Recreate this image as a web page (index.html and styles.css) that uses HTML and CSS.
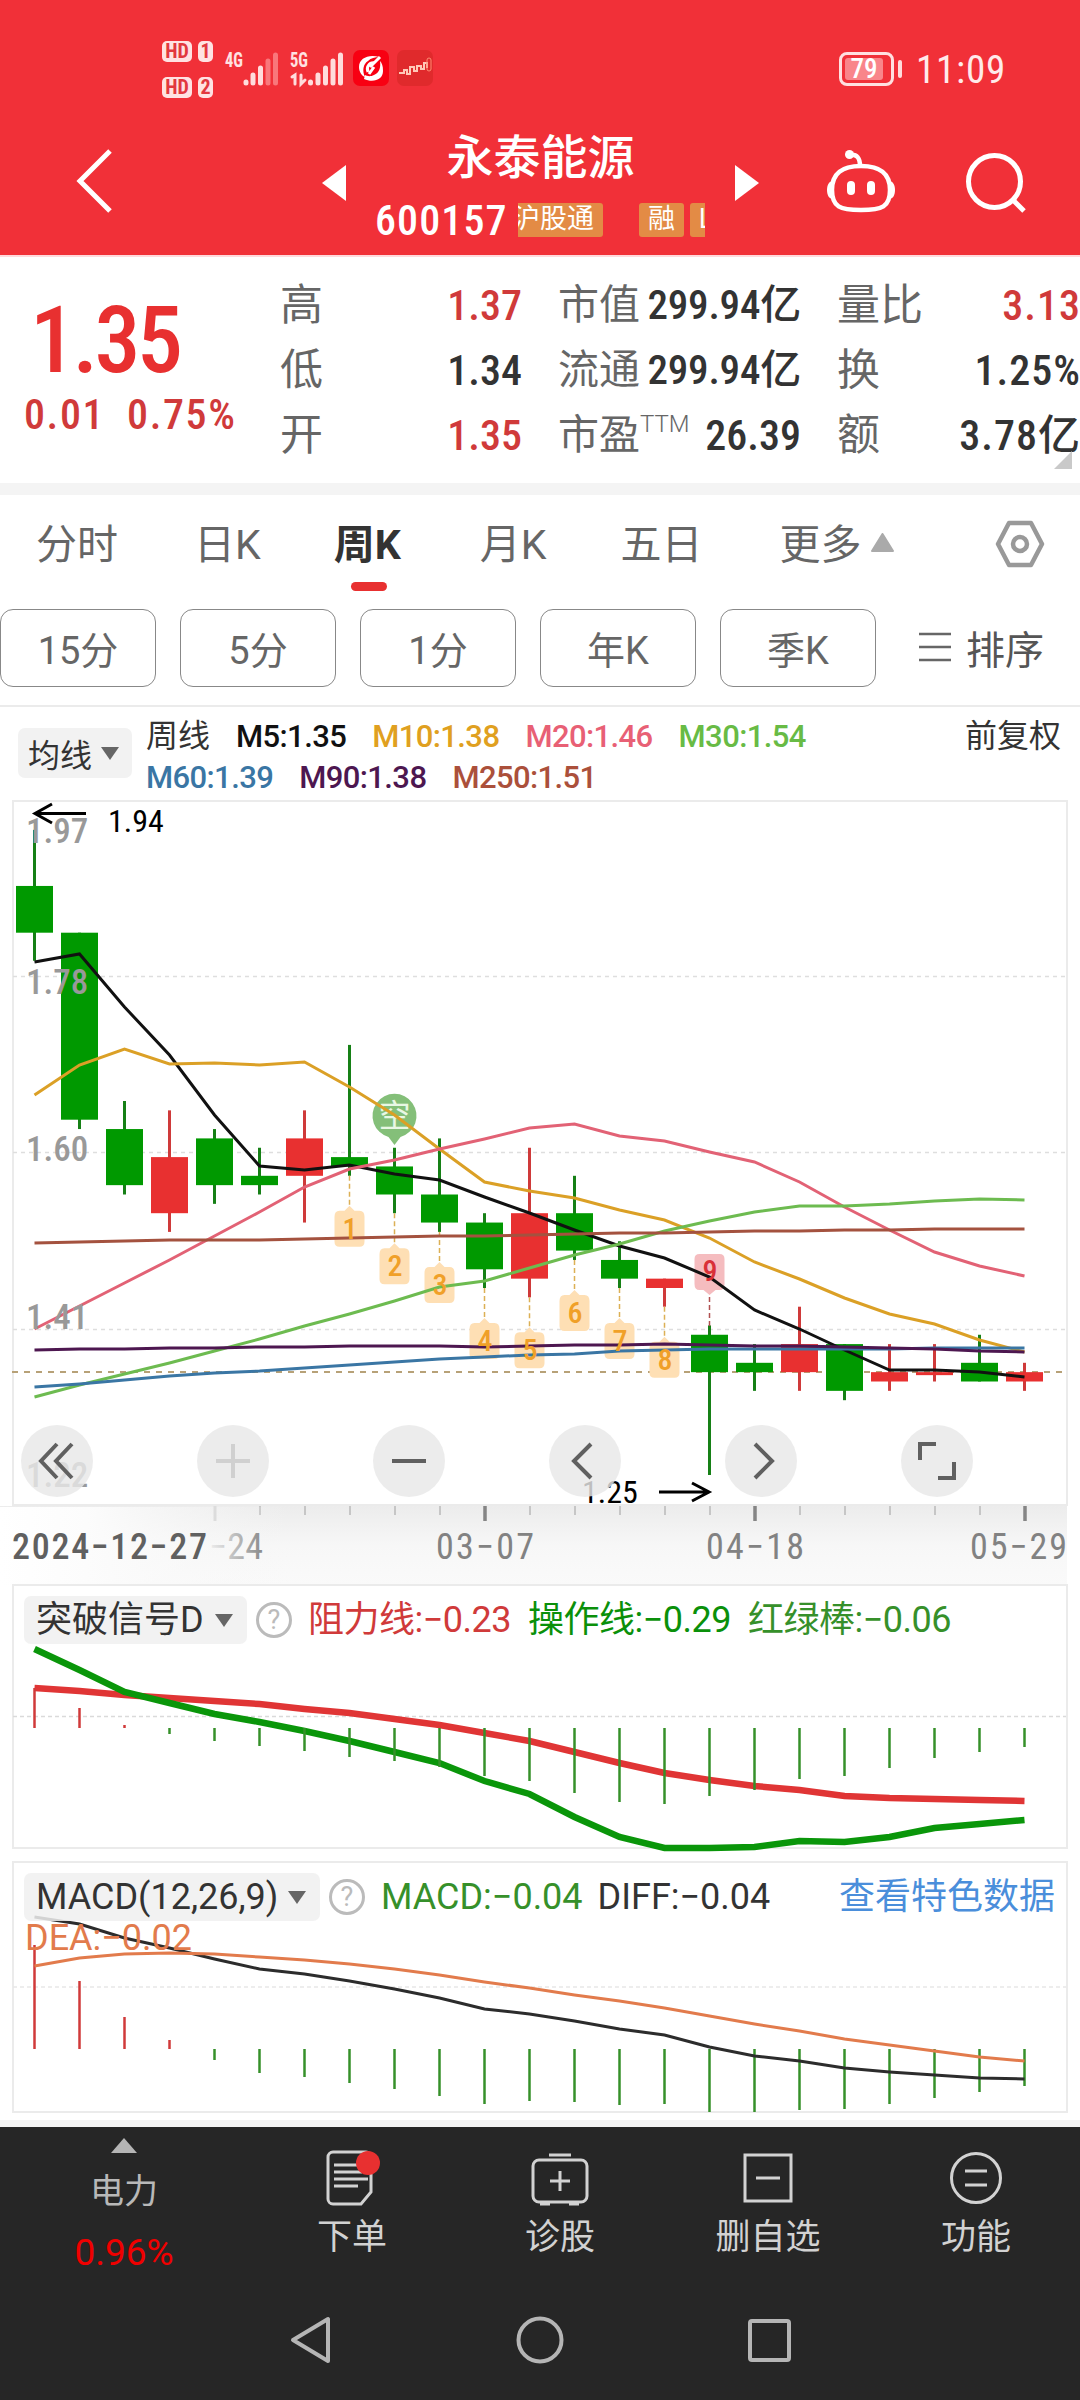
FILE: index.html
```html
<!DOCTYPE html>
<html lang="zh-CN">
<head>
    <meta charset="UTF-8">
    <meta name="viewport" content="width=device-width, initial-scale=1.0">
    <title>永泰能源 600157</title>
    <link rel="stylesheet" href="styles.css">
</head>
<body>
    <header>
        <div class="status-bar">
            <div class="sims">
                <div><b class="hd">HD</b><b class="sim">1</b></div>
                <div><b class="hd">HD</b><b class="sim">2</b></div>
            </div>
            <svg class="signals" width="90" height="40" viewBox="223 48 90 40">
                <text x="225" y="66" font-size="21" textLength="18" lengthAdjust="spacingAndGlyphs">4G</text>
                <text x="290" y="66" font-size="21" textLength="18" lengthAdjust="spacingAndGlyphs">5G</text>
                <g stroke="#ffdcdc" stroke-width="5" stroke-linecap="round">
                    <path d="M246 81v1M253 74v8M260.500 67v15"/>
                    <path d="M268 60v22M275.500 54v28" stroke="#f9777b"/>
                    <path d="M292 76l3-2v9M301 74v9l4-4" stroke-width="3" fill="none"/>
                    <path d="M310.500 81v1"/>
                </g>
            </svg>
            <svg width="36" height="40" viewBox="313 48 36 40">
                <path d="M318 74v8M325.500 67v15M333 60v22M340.500 54v28" stroke="#ffdcdc" stroke-width="5" stroke-linecap="round"/>
            </svg>
            <svg class="app" width="36" height="36" viewBox="0 0 36 36">
                <rect width="36" height="36" rx="7" fill="#f80012"/>
                <path d="M26 7C16 4 6 8 6 17c0 5 3 9 6 10-3-6-2-13 3-16 3-3 7-4 11-4zM11 29c9 4 19 1 19-8 0-5-1-8-3-10 1 7-1 12-6 14-4 2-7 1-9 0z" fill="#fff"/>
                <path d="M27 7L17 17M22 13c-6-1-9 4-7 9M21 17l-5 7" stroke="#fff" stroke-width="3" fill="none"/>
            </svg>
            <svg class="app" width="36" height="36" viewBox="0 0 36 36">
                <rect width="36" height="36" rx="7" fill="#e02a2c"/>
                <path d="M2 23h5v-3h3v4h3v-7h4v4h3v-5h4v3h3v-6h3v5" stroke="#ffc9b8" stroke-width="2" fill="none"/>
                <rect x="30" y="8" width="4" height="13" rx="2" stroke="#ff8a70" fill="none"/>
            </svg>
            <div class="battery"><span>79</span></div>
            <i class="battery-tip"></i>
            <span class="clock">11:09</span>
        </div>
        <div class="title-bar">
            <svg class="back" width="40" height="68" viewBox="0 0 40 68"><path d="M36 4L6 34l30 30" fill="none" stroke="#fff" stroke-width="5"/></svg>
            <svg class="prev" width="24" height="36"><path d="M24 0v36L0 18z" fill="#fff"/></svg>
            <div class="stock">
                <h1>永泰能源</h1>
                <div class="stock-sub">
                    <span class="code">600157</span>
                    <div class="tags"><span>沪股通</span><span class="rong">融</span><span>L</span></div>
                </div>
            </div>
            <svg class="next" width="24" height="36"><path d="M0 0v36l24-18z" fill="#fff"/></svg>
            <svg class="robot" width="72" height="68" viewBox="825 148 72 68">
                <g fill="none" stroke="#fff" stroke-width="4.500">
                    <path d="M832 190c0-17 10-24 29-24s29 7 29 24-8 20-29 20-29-3-29-20z"/>
                    <path d="M850 155c7-1 10 3 10 11"/>
                </g>
                <g fill="#fff">
                    <circle cx="849.500" cy="154.500" r="4.500"/>
                    <path d="M833 181c-4 0-6 4-6 9s2 9 6 9zM889 181c4 0 6 4 6 9s-2 9-6 9z"/>
                    <rect x="847" y="181" width="8" height="14" rx="4"/><rect x="867" y="181" width="8" height="14" rx="4"/>
                </g>
            </svg>
            <svg class="search" width="64" height="64" viewBox="964 152 64 64">
                <g fill="none" stroke="#fff" stroke-width="5"><circle cx="994.500" cy="181.500" r="26"/><path d="M1013 200l11 11"/></g>
            </svg>
        </div>
    </header>

    <section class="quote">
        <div class="price">
            <strong>1.35</strong>
            <p><span>0.01</span><span>0.75%</span></p>
        </div>
        <dl>
            <div><dt>高</dt><dd class="up">1.37</dd></div>
            <div><dt>低</dt><dd>1.34</dd></div>
            <div><dt>开</dt><dd class="up">1.35</dd></div>
        </dl>
        <dl class="mid">
            <div><dt>市值</dt><dd>299.94亿</dd></div>
            <div><dt>流通</dt><dd>299.94亿</dd></div>
            <div><dt>市盈<sup>TTM</sup></dt><dd>26.39</dd></div>
        </dl>
        <dl class="last">
            <div><dt>量比</dt><dd class="up">3.13</dd></div>
            <div><dt>换</dt><dd>1.25%</dd></div>
            <div><dt>额</dt><dd>3.78亿</dd></div>
        </dl>
        <svg class="corner" width="18" height="18"><path d="M18 0v18H0z" fill="#c9c9c9"/></svg>
    </section>

    <nav class="tabs">
        <a>分时</a>
        <a>日K</a>
        <a class="active">周K</a>
        <a>月K</a>
        <a>五日</a>
        <a class="more">更多<svg width="23" height="19"><path d="M11.500 1L22 18H1z" fill="#aaa" stroke="#aaa" stroke-width="2" stroke-linejoin="round"/></svg></a>
        <svg class="setting" width="50" height="48" viewBox="0 0 50 48"><g fill="none" stroke="#999" stroke-width="4.500" stroke-linejoin="round"><path d="M14 3h22l11 21-11 21H14L3 24z"/><circle cx="25" cy="24" r="7"/></g></svg>
    </nav>
    <div class="periods">
        <button>15分</button>
        <button>5分</button>
        <button>1分</button>
        <button>年K</button>
        <button>季K</button>
        <span class="sort"><svg width="32" height="30"><path d="M0 2h32M0 15h32M0 28h32" stroke="#666" stroke-width="2.500"/></svg>排序</span>
    </div>

    <section class="kline">
        <div class="ma-bar">
            <div class="picker">均线<i class="caret"></i></div>
            <div class="ma-list">
                <p><span class="cycle">周线</span><span class="m5">M5:1.35</span><span class="m10">M10:1.38</span><span class="m20">M20:1.46</span><span class="m30">M30:1.54</span></p>
                <p><span class="m60">M60:1.39</span><span class="m90">M90:1.38</span><span class="m250">M250:1.51</span></p>
            </div>
            <span class="fuquan">前复权</span>
        </div>
        <svg id="kChart" width="1080" height="785" viewBox="0 800 1080 785">
            <defs>
                <linearGradient id="axisBg" x1="0" y1="0" x2="0" y2="1"><stop offset="0" stop-color="#ececec"/><stop offset=".5" stop-color="#f7f7f7"/><stop offset="1" stop-color="#fafafa"/></linearGradient>
                <linearGradient id="fade"><stop offset="0" stop-color="#fff"/><stop offset=".3" stop-color="#fcfcfc"/><stop offset="1" stop-color="#f6f6f6" stop-opacity="0"/></linearGradient>
                <linearGradient id="dateFade"><stop offset="0" stop-color="#eee"/><stop offset="1" stop-color="#8a8a8a"/></linearGradient>
            </defs>
        </svg>
        <div class="tools">
            <span><svg width="36" height="36"><path d="M18 1L2 18l16 17M33 1L17 18l16 17"/></svg></span>
            <span class="off"><svg width="36" height="36"><path d="M18 1v34M1 18h34"/></svg></span>
            <span><svg width="36" height="36"><path d="M1 18h34"/></svg></span>
            <span><svg width="36" height="36"><path d="M24 1L7 18l17 17"/></svg></span>
            <span><svg width="36" height="36"><path d="M12 1l17 17-17 17"/></svg></span>
            <span><svg width="38" height="38"><path d="M2 18V2h16M36 20v16H20"/></svg></span>
        </div>
    </section>

    <section class="panel signal">
        <svg id="signalChart" width="1080" height="270" viewBox="0 1583 1080 270"></svg>
        <div class="legend">
            <div class="picker">突破信号D<i class="caret"></i></div>
            <i class="help">?</i>
            <span class="red">阻力线:−0.23</span><span class="green">操作线:−0.29</span><span class="stick">红绿棒:−0.06</span>
        </div>
    </section>

    <section class="panel macd">
        <svg id="macdChart" width="1080" height="256" viewBox="0 1860 1080 256"></svg>
        <div class="legend">
            <div class="picker">MACD(12,26,9)<i class="caret"></i></div>
            <i class="help">?</i>
            <span class="stick">MACD:−0.04</span><span class="diff">DIFF:−0.04</span>
            <a>查看特色数据</a>
        </div>
        <span class="dea">DEA:−0.02</span>
    </section>

    <footer>
        <div class="menu">
            <div class="sector">
                <svg width="26" height="15"><path d="M13 0l13 15H0z" fill="#b5b5b5"/></svg>
                <span>电力</span>
                <em>0.96%</em>
            </div>
            <div class="item">
                <svg width="56" height="60" viewBox="0 0 56 60"><path d="M9 4h33a5 5 0 0 1 5 5v35L37 56H9a5 5 0 0 1-5-5V9a5 5 0 0 1 5-5z"/><path d="M10 17h24M10 24h28M10 31h34M10 38h24"/><circle class="dot" cx="44" cy="15" r="12"/></svg>
                <span>下单</span>
            </div>
            <div class="item">
                <svg width="60" height="60" viewBox="0 0 60 60"><rect x="3" y="12" width="54" height="42" rx="6"/><path d="M19 7h22M30 23v20M20 33h20M10 56h10M39 56h10"/></svg>
                <span>诊股</span>
            </div>
            <div class="item">
                <svg width="56" height="60" viewBox="0 0 56 60"><path d="M5 7h46v46H5zM16 30h24"/></svg>
                <span>删自选</span>
            </div>
            <div class="item">
                <svg width="56" height="60" viewBox="0 0 56 60"><circle cx="28" cy="30" r="24.500"/><path d="M17 23h22M17 37h22"/></svg>
                <span>功能</span>
            </div>
        </div>
        <div class="sys-nav">
            <svg width="48" height="50" viewBox="0 0 48 50"><path d="M41 4v42L6 25z"/></svg>
            <svg width="50" height="50" viewBox="0 0 50 50"><circle cx="25" cy="25" r="21.500"/></svg>
            <svg width="48" height="50" viewBox="0 0 48 50"><rect x="5" y="6" width="39" height="39" rx="2"/></svg>
        </div>
    </footer>

    <script>
        const GREEN = '#009900', RED = '#e83030';
        const x = i => 34.5 + i * 45;
        const y = p => 1475 - (p - 1.25) * 935;

        // [最高, 开/收高, 开/收低, 最低, 是否上涨]
        const candles = [
            [1.94, 1.88, 1.83, 1.80, 0], [1.83, 1.83, 1.63, 1.62, 0], [1.65, 1.62, 1.56, 1.55, 0],
            [1.64, 1.59, 1.53, 1.51, 1], [1.62, 1.61, 1.56, 1.54, 0], [1.60, 1.57, 1.56, 1.55, 0],
            [1.64, 1.61, 1.57, 1.52, 1], [1.71, 1.59, 1.58, 1.57, 0], [1.60, 1.58, 1.55, 1.53, 0],
            [1.61, 1.55, 1.52, 1.51, 0], [1.53, 1.52, 1.47, 1.45, 0], [1.60, 1.53, 1.46, 1.44, 1],
            [1.57, 1.53, 1.49, 1.48, 0], [1.50, 1.48, 1.46, 1.45, 0], [1.46, 1.46, 1.45, 1.43, 1],
            [1.41, 1.40, 1.36, 1.25, 0], [1.39, 1.37, 1.36, 1.34, 0], [1.43, 1.39, 1.36, 1.34, 1],
            [1.39, 1.39, 1.34, 1.33, 0], [1.39, 1.36, 1.35, 1.34, 1], [1.39, 1.36, 1.357, 1.35, 1],
            [1.40, 1.37, 1.35, 1.35, 0], [1.37, 1.36, 1.35, 1.34, 1]
        ];
        const lines = {
            '#111': [962, 954, 1007, 1055, 1115, 1166, 1170, 1165, 1174, 1180, 1197, 1213, 1230, 1246, 1258, 1277, 1310, 1329, 1350, 1370, 1370, 1372, 1377],
            '#dba026': [1095, 1065, 1049, 1064, 1063, 1065, 1062, 1087, 1115, 1149, 1182, 1191, 1198, 1210, 1220, 1238, 1262, 1279, 1298, 1314, 1324, 1340, 1352],
            '#e26275': [1329, 1306, 1283, 1260, 1236, 1212, 1187, 1169, 1160, 1149, 1139, 1128, 1124, 1136, 1141, 1152, 1162, 1182, 1207, 1230, 1252, 1266, 1276],
            '#6dbb50': [1397, 1385, 1374, 1363, 1351, 1339, 1326, 1314, 1301, 1287, 1281, 1268, 1255, 1244, 1231, 1221, 1212, 1206, 1206, 1204, 1201, 1199, 1200],
            '#3a76a4': [1387, 1384, 1380, 1376, 1373, 1371, 1368, 1365, 1362, 1359, 1357, 1355, 1354, 1351, 1350, 1349, 1349, 1349, 1349, 1349, 1348, 1348, 1348],
            '#4d1750': [1350, 1349, 1349, 1348, 1348, 1347, 1347, 1346, 1346, 1346, 1347, 1346, 1345, 1345, 1344, 1345, 1346, 1346, 1347, 1348, 1349, 1351, 1352],
            '#a4523f': [1243, 1242, 1241, 1240, 1240, 1240, 1239, 1238, 1237, 1236, 1236, 1235, 1234, 1233, 1233, 1232, 1231, 1231, 1230, 1230, 1229, 1229, 1229]
        };
        const resist = [1688, 1691, 1695, 1698, 1701, 1704, 1709, 1713, 1719, 1725, 1733, 1741, 1752, 1763, 1773, 1780, 1786, 1790, 1796, 1798, 1799, 1800, 1801];
        const operate = [1649, 1670, 1692, 1703, 1714, 1722, 1731, 1741, 1752, 1763, 1781, 1794, 1817, 1837, 1848, 1848, 1847, 1841, 1842, 1837, 1828, 1824, 1820];
        const sticks = [1688, 1708, 1725, 1734, 1741, 1746, 1751, 1757, 1761, 1767, 1776, 1781, 1793, 1802, 1804, 1796, 1790, 1779, 1776, 1768, 1758, 1752, 1747];
        const diff = [1917, 1924, 1938, 1948, 1959, 1969, 1974, 1981, 1989, 1998, 2009, 2014, 2021, 2029, 2035, 2047, 2056, 2061, 2068, 2072, 2075, 2078, 2079];
        const dea = [1966, 1958, 1954, 1953, 1954, 1957, 1960, 1964, 1969, 1975, 1982, 1988, 1995, 2001, 2008, 2016, 2024, 2031, 2039, 2045, 2051, 2057, 2061];
        const macd = [1945, 1981, 2017, 2040, 2060, 2073, 2077, 2083, 2089, 2096, 2104, 2101, 2102, 2105, 2104, 2112, 2112, 2110, 2109, 2104, 2098, 2092, 2086];

        const poly = (ys, color, w) => `<polyline points="${ys.map((v, i) => x(i) + ',' + v).join(' ')}" fill="none" stroke="${color}" stroke-width="${w}"/>`;
        const path = (d, color, w, dash) => `<path d="${d}" fill="none" stroke="${color}" stroke-width="${w}" ${dash ? `stroke-dasharray="${dash}"` : ''}/>`;
        const text = (tx, ty, s, cls, extra) => `<text x="${tx}" y="${ty}" class="${cls}" ${extra || ''}>${s}</text>`;
        const frame = (top, h) => `<rect x="13" y="${top}" width="1054" height="${h}" fill="none" stroke="#ebebeb" stroke-width="2"/>`;
        const bars = (ys, zero) => ys.map((v, i) => path(`M${x(i)} ${zero}V${v}`, v < zero ? '#d03a3a' : '#36902a', 2.5)).join('');

        function drawKline() {
            let s = '<rect x="0" y="1506" width="1067" height="79" fill="url(#axisBg)"/>';
            s += frame(801, 704);
            s += path('M13 976.5H1066M13 1152.5H1066M13 1329.5H1066', '#dedede', 1.5, '4 4');
            s += path('M12 1372H1066', '#b7a177', 2, '6 6');
            candles.forEach(([hi, top, bot, lo, up], i) => {
                const color = up ? RED : GREEN;
                s += path(`M${x(i)} ${y(hi)}V${y(lo)}`, up ? '#cf3a3a' : '#168016', 3);
                s += `<rect x="${x(i) - 18.5}" y="${y(top)}" width="37" height="${Math.max(y(bot) - y(top), 3)}" fill="${color}"/>`;
            });
            // 九转序列
            for (let n = 1; n <= 8; n++) {
                const i = n + 6, lo = y(candles[i][3]), t = lo + 30, cx = x(i);
                s += path(`M${cx} ${lo}V${t}`, '#dcb055', 1.5, '5 3');
                s += `<path d="M${cx} ${t}l5 5h5q5 0 5 6v25q0 5-5 5h-20q-5 0-5-5v-25q0-6 5-6h5z" fill="#fedfb4"/>`;
            }
            s += path(`M${x(15)} 1297V1326`, '#b05050', 1.5, '5 3');
            s += `<path d="M${x(15)} 1295l-6-5h-4q-5 0-5-6v-25q0-5 5-5h20q5 0 5 5v25q0 6-5 6h-4z" fill="#f5bcbf"/>`;
            s += `<path d="M${x(8)} 1145l-6-8a22 22 0 1 1 12 0z" fill="#84bf79"/>` + text(x(8), 1127, '空', 'kong');
            for (const c in lines) s += poly(lines[c], c, 3);
            for (let n = 1; n <= 8; n++) s += text(x(n + 6) + .5, y(candles[n + 6][3]) + 63, n, 'nine', 'fill="#f0a028"');
            s += text(x(15) + .5, 1281, '9', 'nine', 'fill="#d93038"');
            [['1.97', 843], ['1.78', 994], ['1.60', 1161], ['1.41', 1329], ['1.22', 1487]].forEach(([t, ty]) => {
                s += text(26, ty, t, 'scale');
            });
            s += path('M86 813.500H35M52 804L35 813.500L52 823', '#000', 3) + text(108, 832, '1.94', 'peak');
            s += path('M659 1492H709M692 1483L709 1492L692 1501', '#000', 3) + text(582, 1503, '1.25', 'peak');
            for (let i = 5; i < 23; i++) {
                const big = i % 6 == 4;
                s += path(`M${x(i) + .5} 1506v${big ? 15 : 9}`, big ? '#858585' : '#c6c6c6', big ? 3.5 : 2);
            }
            s += '<rect x="0" y="1507" width="290" height="78" fill="url(#fade)"/>';
            s += path('M215 1506v15', '#dcdcdc', 3);
            s += text(209, 1559, '−24', 'date', 'textLength="54" style="fill:url(#dateFade)"');
            s += text(12, 1559, '2024−12−27', 'date dark', 'textLength="195"');
            s += text(436, 1559, '03−07', 'date', 'textLength="98"') + text(706, 1559, '04−18', 'date', 'textLength="98"') + text(970, 1559, '05−29', 'date', 'textLength="97"');
            document.getElementById('kChart').innerHTML += s;
        }

        function drawSignal() {
            document.getElementById('signalChart').innerHTML = frame(1585, 263)
                + path('M13 1716.5H1066', '#dadada', 1.5, '4 3') + poly(resist, '#e03535', 6.5)
                + poly(operate, '#0a960a', 6.5) + bars(sticks, 1728);
        }

        function drawMacd() {
            document.getElementById('macdChart').innerHTML = frame(1862, 250)
                + path('M13 1987H1066', '#e8e8e8', 1.5, '4 3') + bars(macd, 2049)
                + poly(diff, '#2c2c2c', 3) + poly(dea, '#e27b4c', 3);
        }

        drawKline();
        drawSignal();
        drawMacd();
    </script>
</body>
</html>
```
FILE: styles.css
```css
* {
    box-sizing: border-box;
    margin: 0;
    padding: 0;
}
body {
    width: 1080px;
    height: 2400px;
    overflow: hidden;
    background-color: #fff;
    color: #333;
    font-family: "Roboto Condensed", "Noto Sans CJK SC", sans-serif;
}
svg {
    display: block;
    flex: none;
}
i, em {
    font-style: normal;
}
header {
    height: 255px;
    background-color: #f13038;
    color: #fff;
}
.status-bar {
    display: flex;
    align-items: center;
    height: 138px;
    padding-left: 162px;
}
.sims {
    width: 61px;
    display: flex;
    flex-direction: column;
    gap: 15px;
}
.sims div {
    display: flex;
    gap: 6px;
}
.sims b {
    height: 21px;
    line-height: 21px;
    font-size: 20px;
    text-align: center;
    background-color: #ffe2e2;
    color: #e2383e;
    border-radius: 5px;
}
.hd {
    width: 30px;
}
.sim {
    width: 15px;
    border-top-right-radius: 8px;
}
.signals text {
    fill: #ffe2e2;
    font-weight: 700;
}
.app {
    margin: -2px 0 0 4px;
}
.app + .app {
    margin-left: 8px;
}
.battery {
    width: 55px;
    height: 34px;
    margin-left: 406px;
    padding: 3px;
    border: 3px solid #ffe0e0;
    border-radius: 8px;
    font-size: 27px;
    font-weight: 500;
    line-height: 22px;
    text-align: center;
}
.battery span {
    display: block;
    width: 38px;
    height: 22px;
    border-radius: 3px;
    background-color: #f9858a;
}
.battery-tip {
    width: 4px;
    height: 18px;
    margin-left: 4px;
    border-radius: 2px;
    background-color: #ffdcdc;
}
.clock {
    margin: 2px 0 0 14px;
    font-size: 39px;
    letter-spacing: .8px;
    color: #ffeaea;
}
.title-bar {
    display: flex;
    height: 117px;
}
.back {
    margin: 9px 0 0 74px;
}
.prev {
    margin: 27px 0 0 208px;
}
.stock {
    width: 331px;
    margin: -8px 0 0 29px;
}
.stock h1 {
    width: 331px;
    text-align: center;
    font-size: 47px;
    font-weight: 500;
    line-height: 56px;
}
.stock-sub {
    display: flex;
    align-items: center;
    height: 50px;
    margin-top: 9px;
}
.code {
    width: 143px;
    font-size: 42px;
    font-weight: 500;
    letter-spacing: 1.1px;
}
.tags {
    display: flex;
    width: 187px;
    overflow: hidden;
    font-size: 27px;
}
.tags span {
    flex: none;
    height: 34px;
    padding: 0 9px;
    margin-right: 6px;
    line-height: 33px;
    border-radius: 3px;
    background-color: #e38b45;
}
.tags span:first-child {
    margin-left: -14px;
    margin-right: 36px;
}
.next {
    margin: 27px 0 0 29px;
}
.robot {
    margin: 10px 0 0 66px;
}
.search {
    margin: 14px 0 0 67px;
}
.quote {
    position: relative;
    display: flex;
    height: 240px;
    border-top: 2px solid #ffd9dc;
    border-bottom: 12px solid #f4f4f4;
    font-size: 42px;
}
.price {
    width: 280px;
    padding: 32px 0 0 24px;
    color: #d03a3a;
}
.price strong {
    display: block;
    padding-left: 6px;
    font-size: 92px;
    font-weight: 500;
    line-height: 104px;
    letter-spacing: -3.5px;
    color: #e83030;
}
.price p {
    display: flex;
    gap: 22px;
    font-weight: 500;
    line-height: 44px;
    letter-spacing: 1.6px;
}
dl {
    width: 242px;
    padding-top: 16px;
}
dl div {
    display: flex;
    justify-content: space-between;
    height: 65px;
    line-height: 65px;
}
dl.mid {
    width: 243px;
    margin-left: 36px;
}
dl.last {
    width: 243px;
    margin-left: 36px;
}
dt {
    white-space: nowrap;
    font-size: 43px;
    color: #666;
}
.mid dt {
    font-size: 41px;
}
sup {
    position: relative;
    top: -2px;
    font-family: Roboto, sans-serif;
    font-weight: 300;
    font-size: 24px;
    line-height: 1;
}
dd {
    font-weight: 500;
}
.mid dd {
    font-size: 41px;
    letter-spacing: -.2px;
}
.mid div:last-child dd {
    font-size: 42px;
    letter-spacing: 0;
}
.last dd {
    letter-spacing: 1px;
    margin-right: -1px;
}
.up {
    color: #d03a3a;
}
.corner {
    position: absolute;
    right: 8px;
    bottom: 14px;
}
.tabs {
    display: flex;
    align-items: center;
    height: 97px;
    padding-left: 36px;
    font-family: Roboto, "Noto Sans CJK SC", sans-serif;
    font-size: 41px;
    line-height: 60px;
    color: #666;
}
.tabs a {
    position: relative;
    margin-top: 3px;
}
.tabs a:nth-child(2) {
    margin-left: 76px;
}
.tabs a:nth-child(3) {
    margin-left: 73px;
}
.tabs a:nth-child(4) {
    margin-left: 79px;
}
.tabs a:nth-child(5) {
    margin-left: 74px;
}
.tabs a.active {
    font-weight: 700;
    color: #333;
}
.tabs .active::after {
    content: "";
    position: absolute;
    left: 17px;
    bottom: -16px;
    width: 36px;
    height: 9px;
    border-radius: 5px;
    background-color: #e83030;
}
.tabs .more {
    display: flex;
    align-items: center;
    gap: 9px;
    margin-left: 77px;
}
.more svg {
    margin-top: -5px;
}
.setting {
    margin-left: auto;
    margin-right: 35px;
}
.periods {
    display: flex;
    gap: 24px;
    height: 115px;
    padding-top: 17px;
    border-bottom: 2px solid #ebebeb;
}
.periods button {
    width: 156px;
    height: 78px;
    padding-bottom: 2px;
    font-family: Roboto, "Noto Sans CJK SC", sans-serif;
    font-size: 38px;
    color: #666;
    background-color: #fff;
    border: 1px solid #888;
    border-radius: 13px;
}
.sort {
    display: flex;
    align-items: center;
    gap: 15px;
    height: 76px;
    margin-left: 19px;
    font-size: 39px;
    color: #555;
}
.kline {
    position: relative;
}
.ma-bar {
    display: flex;
    height: 93px;
    padding-left: 18px;
    font-family: Roboto, "Noto Sans CJK SC", sans-serif;
    font-size: 31px;
}
.picker {
    display: flex;
    align-items: center;
    background-color: #f2f2f2;
    border-radius: 7px;
}
.ma-bar .picker {
    width: 114px;
    height: 50px;
    margin-top: 21px;
    padding-left: 10px;
    font-size: 32px;
}
.caret {
    margin-left: 9px;
    border: 9px solid transparent;
    border-top: 13px solid #666;
    border-bottom: 0;
}
.ma-list {
    margin: 9px 0 0 14px;
    line-height: 41px;
}
.ma-list p {
    display: flex;
    gap: 26px;
    height: 41px;
    font-weight: 500;
    letter-spacing: -.6px;
}
.ma-list .cycle {
    font-size: 32px;
    font-weight: 400;
    letter-spacing: 0;
}
.m5 { color: #111; }
.m10 { color: #e0a020; }
.m20 { color: #e86075; }
.m30 { color: #68bb45; }
.m60 { color: #3a76a4; }
.m90 { color: #4d1750; }
.m250 { color: #ab503b; }
.fuquan {
    margin-left: auto;
    margin-right: 19px;
    line-height: 59px;
    font-size: 32px;
}
.kong {
    font-size: 32px;
    fill: #e8f7e4;
    text-anchor: middle;
}
.nine {
    font-size: 30px;
    font-weight: 500;
    text-anchor: middle;
}
.scale {
    font-size: 35px;
    font-weight: 500;
    fill: #999;
}
.peak {
    font-size: 32px;
}
.date {
    font-size: 36px;
    fill: #828282;
    font-weight: 400;
}
.date.dark {
    fill: #606060;
    font-weight: 500;
}
.tools {
    position: absolute;
    left: 21px;
    top: 718px;
    display: flex;
    gap: 104px;
}
.tools span {
    display: flex;
    align-items: center;
    justify-content: center;
    width: 72px;
    height: 72px;
    border-radius: 50%;
    background-color: rgba(232, 232, 232, .82);
}
.tools svg {
    overflow: visible;
}
.tools path {
    fill: none;
    stroke: #606060;
    stroke-width: 4;
}
.tools .off path {
    stroke: #d0d0d0;
}
.panel {
    position: relative;
}
.signal {
    height: 277px;
    margin-top: -2px;
}
.macd {
    height: 260px;
}
.legend {
    position: absolute;
    left: 24px;
    right: 24px;
    top: 13px;
    display: flex;
    align-items: center;
    height: 48px;
    font-family: Roboto, "Noto Sans CJK SC", sans-serif;
    font-size: 36px;
    line-height: 44px;
    white-space: nowrap;
}
.legend .picker {
    height: 48px;
    width: 223px;
    padding-left: 12px;
    background-color: rgba(240, 240, 240, .85);
}
.macd .picker {
    width: 296px;
}
.legend .picker .caret {
    margin-left: auto;
    margin-right: 14px;
}
.help {
    width: 36px;
    height: 36px;
    margin: 0 16px 0 9px;
    border: 3px solid #bbb;
    border-radius: 50%;
    line-height: 31px;
    font-size: 27px;
    text-align: center;
    color: #bbb;
}
.legend span {
    margin-right: 15px;
}
.signal .legend span {
    letter-spacing: -.5px;
    margin-right: 17px;
}
.red {
    color: #d03a3a;
}
.green {
    color: #0a900a;
}
.stick {
    color: #36902a;
}
.legend a {
    margin-left: auto;
    margin-right: 1px;
    color: #4a8edb;
}
.dea {
    position: absolute;
    left: 25px;
    top: 57px;
    font-family: Roboto, sans-serif;
    font-size: 36px;
    line-height: 42px;
    color: #e27b4c;
}
footer {
    height: 280px;
    border-top: 7px solid #f4f4f4;
    background-color: #262626;
    color: #d2d2d2;
}
.menu {
    display: flex;
    height: 165px;
    font-size: 35px;
}
.menu span {
    line-height: 44px;
}
.sector {
    display: flex;
    flex-direction: column;
    align-items: center;
    width: 248px;
    padding-top: 11px;
    font-size: 34px;
}
.sector span {
    margin-top: 16px;
    color: #b8b8b8;
}
.sector em {
    margin-top: 18px;
    line-height: 44px;
    font-family: Roboto, sans-serif;
    font-size: 37px;
    color: #f00000;
}
.item {
    display: flex;
    flex-direction: column;
    align-items: center;
    width: 208px;
    padding-top: 21px;
}
.item span {
    margin-top: 8px;
}
.item svg {
    fill: none;
    stroke: #d2d2d2;
    stroke-width: 3;
}
.item .dot {
    fill: #e83030;
    stroke: none;
}
.sys-nav {
    display: flex;
    justify-content: center;
    gap: 180px;
    padding-top: 23px;
}
.sys-nav svg {
    fill: none;
    stroke: #b5b5b5;
    stroke-width: 4;
    stroke-linejoin: round;
}
```
